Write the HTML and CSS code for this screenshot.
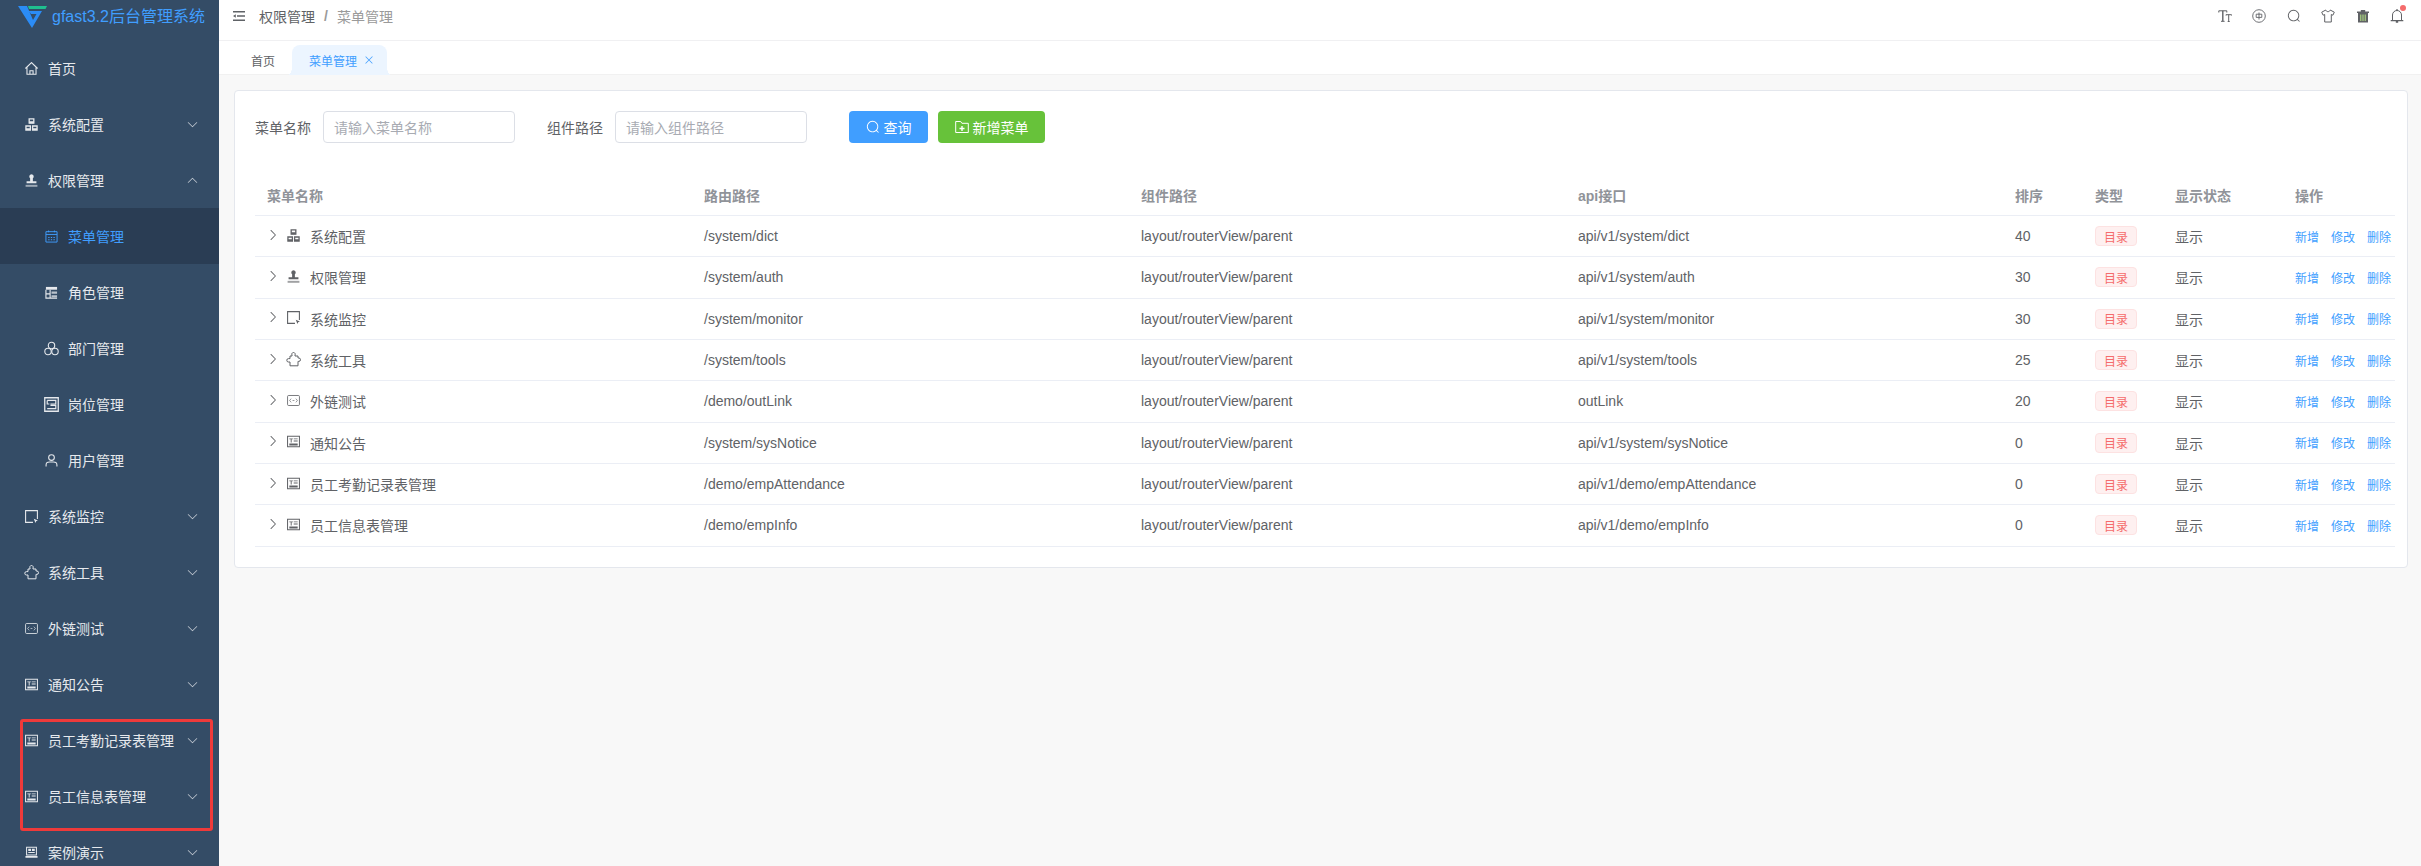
FILE: index.html
```html
<!DOCTYPE html>
<html lang="zh-CN">
<head>
<meta charset="utf-8">
<title>gfast3.2后台管理系统</title>
<link rel="stylesheet" href="styles.css">
</head>
<body>
<svg class="sprite" xmlns="http://www.w3.org/2000/svg">
  <symbol id="i-home" viewBox=".4 .4 13.2 13.2"><path d="M.8 7 7 1l6.200 6M2.400 5.800v7h9.200v-7M5.400 12.800V9.200h3.200v3.600" fill="none" stroke="currentColor" stroke-width="1.100"/></symbol>
  <symbol id="i-org" viewBox="0 0 14 14"><path d="M4.500 1h5v4.600h-5zM1 8.600h4.800V13H1zM8.200 8.600H13V13H8.200z" fill="none" stroke="currentColor" stroke-width="1.400"/><path d="M1 11h4.800v2H1zM8.200 11H13v2H8.200zM4.500 3.600h5v2h-5z" fill="currentColor"/></symbol>
  <symbol id="i-stamp" viewBox=".6 .4 12.800 13.200"><path d="M7 .6a2.300 2.300 0 0 1 1.400 4.100v3h3.600v2.200H2V7.700h3.600v-3A2.300 2.300 0 0 1 7 .6z" fill="currentColor"/><path d="M1 11.400h12v2H1z" fill="currentColor" opacity=".6"/></symbol>
  <symbol id="i-cal" viewBox="0 0 14 14"><path d="M1 1.800h12V13H1zM1 4.800h12" fill="none" stroke="currentColor" stroke-width="1"/><path d="M3.500 7.500h1.400v1H3.500zM6.300 7.500h1.400v1H6.300zM9.100 7.500h1.400v1H9.100zM3.500 10h1.400v1H3.500zM6.300 10h1.400v1H6.300zM9.100 10h1.400v1H9.100zM3.400.5h1v2h-1zM9.600.5h1v2h-1z" fill="currentColor"/></symbol>
  <symbol id="i-table" viewBox="0 0 14 14"><path d="M1 1h12v3H1z" fill="currentColor"/><path d="M1 4v9h12M1 8.500h4.500M5.500 4v9" fill="none" stroke="currentColor" stroke-width="1.200"/><path d="M7 6h6v2.400H7zM7 10h6v2H7z" fill="currentColor" opacity=".75"/></symbol>
  <symbol id="i-dept" viewBox="0 0 15 14"><g fill="none" stroke="currentColor" stroke-width="1.100"><circle cx="7.500" cy="4" r="3.200"/><circle cx="4" cy="10" r="3.200"/><circle cx="11" cy="10" r="3.200"/></g></symbol>
  <symbol id="i-post" viewBox="0 0 14 14"><path d="M.7.7h12.600v12.600H.7z" fill="none" stroke="currentColor" stroke-width="1.200"/><path d="M3 3.200h8v3.300H6M3 3.200v3.300h2M3 10.800h8V7.800H6" fill="none" stroke="currentColor" stroke-width="1.100"/></symbol>
  <symbol id="i-user" viewBox=".6 .4 12.800 13.200"><circle cx="7" cy="4" r="2.900" fill="none" stroke="currentColor" stroke-width="1.100"/><path d="M1.500 13v-1.500c0-2 1.800-3 3.500-3h4c1.700 0 3.500 1 3.500 3V13" fill="none" stroke="currentColor" stroke-width="1.100"/></symbol>
  <symbol id="i-monitor" viewBox=".4 .4 13.200 13.200"><path d="M8.500 13H1V1h12v8.500" fill="none" stroke="currentColor" stroke-width="1.100"/><path d="M9.300 9.300 13.500 11l-1.800.7-.7 1.800z" fill="currentColor"/></symbol>
  <symbol id="i-tool" viewBox="0 0 15 14"><path d="M4 3.500H6V2.500a1.700 1.700 0 1 1 3 0V3.500H12V5.500H12.800a1.700 1.700 0 1 1 0 3.400H12V13.300H4V9.500H2.500a1.700 1.700 0 1 1 0-3.400H4Z" fill="none" stroke="currentColor" stroke-width="1"/></symbol>
  <symbol id="i-code" viewBox="0 0 14 14"><rect x=".6" y="1.600" width="12.800" height="10.800" rx="1.200" fill="none" stroke="currentColor" stroke-width=".9"/><path d="M4.500 5 2.800 7l1.700 2M9.500 5l1.700 2-1.700 2M6 7h2" fill="none" stroke="currentColor" stroke-width=".7"/></symbol>
  <symbol id="i-notice" viewBox="0 0 14 14"><path d="M.6 1.300h12.800v11.400H.6z" fill="none" stroke="currentColor" stroke-width="1.100"/><path d="M2.500 3.700h3.800v1H5v3.500H4V4.700H2.500zM7.200 3.700h4.300v1H7.200zM7.200 6h4.300v1H7.200zM2.500 9.200h9v2h-9z" fill="currentColor"/></symbol>
  <symbol id="i-demo" viewBox="0 0 14 14"><path d="M1.700 1.300h10.600v8.500H1.700z" fill="none" stroke="currentColor" stroke-width="1.100"/><path d="M3.500 3h3v2.500h-3zM7.500 3h3v2.500h-3zM3.500 6.500h7v1h-7zM.5 10.700h13v2H.5z" fill="currentColor"/></symbol>
  <symbol id="i-down" viewBox="0 0 1024 1024"><path d="M831.872 340.864 512 652.672 192.128 340.864a30.592 30.592 0 0 0-42.752 0 29.12 29.12 0 0 0 0 41.600L489.664 714.240a32 32 0 0 0 44.672 0l340.288-331.712a29.120 29.120 0 0 0 0-41.728 30.592 30.592 0 0 0-42.752 0z" fill="currentColor"/></symbol>
  <symbol id="i-right" viewBox="0 0 1024 1024"><path d="M340.864 149.312a30.592 30.592 0 0 0 0 42.752L652.736 512 340.864 831.872a30.592 30.592 0 0 0 0 42.752 29.120 29.120 0 0 0 41.728 0L714.240 534.336a32 32 0 0 0 0-44.672L382.592 149.376a29.120 29.120 0 0 0-41.728 0z" fill="currentColor"/></symbol>
  <symbol id="i-close" viewBox="0 0 1024 1024"><path d="M764.288 214.592 512 466.880 259.712 214.592a31.936 31.936 0 0 0-45.120 45.120L466.752 512 214.528 764.224a31.936 31.936 0 1 0 45.120 45.184L512 557.184l252.288 252.288a31.936 31.936 0 0 0 45.120-45.120L557.120 512.064l252.288-252.352a31.936 31.936 0 1 0-45.120-45.184z" fill="currentColor"/></symbol>
  <symbol id="i-search" viewBox="0 0 1024 1024"><path d="m795.904 750.720 124.992 124.928a32 32 0 0 1-45.248 45.248L750.656 795.904a416 416 0 1 1 45.248-45.248zM480 832a352 352 0 1 0 0-704 352 352 0 0 0 0 704z" fill="currentColor"/></symbol>
  <symbol id="i-folder" viewBox="0 0 14 14"><path d="M.7 1.500h5l1.200 1.800h6.400v9.200H.7z" fill="none" stroke="currentColor" stroke-width="1"/><path d="M6.300 6h1.400v1.800h1.800v1.400H7.700V11H6.300V9.200H4.500V7.800h1.800z" fill="currentColor"/></symbol>
  <symbol id="i-fold" viewBox="0 0 12 12"><path d="M0 1h12v1.500H0zM0 9.500h12V11H0zM4 5.250h8v1.500H4zM0 6l2.800-1.800v3.600z" fill="currentColor"/></symbol>
</svg>

<div class="app">
  <aside class="sidebar">
    <div class="logo">
      <svg class="logo-mark" viewBox="0 0 29 22"><path d="M0 0h9l6 14 3.500-6H13l-2-3h13L14 22z" fill="#2b8cf6"/><path d="M10 0h19l-1.500 3H11z" fill="#1fbf8f"/></svg>
      <span class="logo-title">gfast3.2后台管理系统</span>
    </div>
    <nav class="menu">
      <a class="menu-item"><svg class="mi"><use href="#i-home"/></svg><span>首页</span></a>
      <a class="menu-item"><svg class="mi"><use href="#i-org"/></svg><span>系统配置</span><svg class="chev"><use href="#i-down"/></svg></a>
      <a class="menu-item"><svg class="mi"><use href="#i-stamp"/></svg><span>权限管理</span><svg class="chev up"><use href="#i-down"/></svg></a>
      <a class="menu-item sub active"><svg class="mi"><use href="#i-cal"/></svg><span>菜单管理</span></a>
      <a class="menu-item sub"><svg class="mi"><use href="#i-table"/></svg><span>角色管理</span></a>
      <a class="menu-item sub"><svg class="mi wide"><use href="#i-dept"/></svg><span>部门管理</span></a>
      <a class="menu-item sub"><svg class="mi wide"><use href="#i-post"/></svg><span>岗位管理</span></a>
      <a class="menu-item sub"><svg class="mi"><use href="#i-user"/></svg><span>用户管理</span></a>
      <a class="menu-item"><svg class="mi"><use href="#i-monitor"/></svg><span>系统监控</span><svg class="chev"><use href="#i-down"/></svg></a>
      <a class="menu-item"><svg class="mi wide"><use href="#i-tool"/></svg><span>系统工具</span><svg class="chev"><use href="#i-down"/></svg></a>
      <a class="menu-item"><svg class="mi"><use href="#i-code"/></svg><span>外链测试</span><svg class="chev"><use href="#i-down"/></svg></a>
      <a class="menu-item"><svg class="mi"><use href="#i-notice"/></svg><span>通知公告</span><svg class="chev"><use href="#i-down"/></svg></a>
      <a class="menu-item"><svg class="mi"><use href="#i-notice"/></svg><span>员工考勤记录表管理</span><svg class="chev"><use href="#i-down"/></svg></a>
      <a class="menu-item"><svg class="mi"><use href="#i-notice"/></svg><span>员工信息表管理</span><svg class="chev"><use href="#i-down"/></svg></a>
      <a class="menu-item"><svg class="mi"><use href="#i-demo"/></svg><span>案例演示</span><svg class="chev"><use href="#i-down"/></svg></a>
    </nav>
    <div class="highlight"></div>
  </aside>

  <div class="main">
    <header class="navbar">
      <svg class="fold"><use href="#i-fold"/></svg>
      <span class="crumb">权限管理</span>
      <span class="crumb-sep">/</span>
      <span class="crumb current">菜单管理</span>
      <div class="tools">
        <svg class="tool" viewBox="0 0 14 14"><path d="M.8 3.500V1.800h8v1.700M3 12.300h3.600M8 6.500V5.700h5.500v.8M9.700 12.500h2" fill="none" stroke="currentColor" stroke-width="1"/><path d="M4.800 1.800v10.500" stroke="currentColor" stroke-width="1.400"/><path d="M10.700 5.700v6.800" stroke="currentColor" stroke-width="1"/></svg>
        <svg class="tool" viewBox="0 0 14 14"><circle cx="7" cy="7" r="6.300" fill="none" stroke="currentColor" stroke-width=".9"/><path d="M4.200 5.200h5.600v3.200H4.200zM7 3.500v7" fill="none" stroke="currentColor" stroke-width=".9"/></svg>
        <svg class="tool"><use href="#i-search"/></svg>
        <svg class="tool" viewBox="0 0 14 14"><path d="M4.800 1 .7 3.200l1.400 3 1.600-.7V13h6.600V5.500l1.600.7 1.400-3L9.200 1C8.800 3.200 5.200 3.200 4.800 1z" fill="none" stroke="currentColor" stroke-width="1"/></svg>
        <svg class="tool" viewBox="0 0 14 14"><path d="M1 2.500h12v1.500H1zM4.800 1h4.400v1.500H4.800zM2 4h10v9.500H2z" fill="currentColor"/><path d="M4.300 5.500h1v6.500h-1zM6.500 5.500h1v6.500h-1zM8.700 5.500h1v6.500h-1z" fill="#b8e986"/></svg>
        <span class="bell">
          <svg class="tool" viewBox="0 0 14 14"><path d="M2.500 11.200V6a4.500 4.500 0 0 1 9 0v5.200" fill="none" stroke="currentColor" stroke-width="1"/><path d="M.7 11h12.600v1.300H.7zM5.800 12.300h2.400v1.400H5.800zM6.200.2h1.600v1.500H6.200z" fill="currentColor"/></svg>
          <i class="dot"></i>
        </span>
      </div>
    </header>

    <div class="tabs">
      <a class="tab">首页</a>
      <a class="tab active">菜单管理<svg class="tab-close"><use href="#i-close"/></svg></a>
    </div>

    <main class="content">
      <section class="card">
        <form class="search">
          <label class="field-label">菜单名称</label>
          <span class="input">请输入菜单名称</span>
          <label class="field-label second">组件路径</label>
          <span class="input">请输入组件路径</span>
          <button type="button" class="btn primary"><svg class="btn-icon"><use href="#i-search"/></svg>查询</button>
          <button type="button" class="btn success"><svg class="btn-icon"><use href="#i-folder"/></svg>新增菜单</button>
        </form>

        <table class="grid">
          <colgroup>
            <col class="c-path"><col class="c-path"><col class="c-path"><col class="c-path">
            <col class="c-num"><col class="c-num"><col class="c-show"><col class="c-ops">
          </colgroup>
          <thead>
            <tr><th>菜单名称</th><th>路由路径</th><th>组件路径</th><th>api接口</th><th>排序</th><th>类型</th><th>显示状态</th><th>操作</th></tr>
          </thead>
          <tbody>
            <tr><td><div class="name"><svg class="exp"><use href="#i-right"/></svg><svg class="ri"><use href="#i-org"/></svg>系统配置</div></td><td>/system/dict</td><td>layout/routerView/parent</td><td>api/v1/system/dict</td><td>40</td><td><span class="tag">目录</span></td><td class="show">显示</td><td class="ops"><a>新增</a><a>修改</a><a>删除</a></td></tr>
            <tr><td><div class="name"><svg class="exp"><use href="#i-right"/></svg><svg class="ri"><use href="#i-stamp"/></svg>权限管理</div></td><td>/system/auth</td><td>layout/routerView/parent</td><td>api/v1/system/auth</td><td>30</td><td><span class="tag">目录</span></td><td class="show">显示</td><td class="ops"><a>新增</a><a>修改</a><a>删除</a></td></tr>
            <tr><td><div class="name"><svg class="exp"><use href="#i-right"/></svg><svg class="ri"><use href="#i-monitor"/></svg>系统监控</div></td><td>/system/monitor</td><td>layout/routerView/parent</td><td>api/v1/system/monitor</td><td>30</td><td><span class="tag">目录</span></td><td class="show">显示</td><td class="ops"><a>新增</a><a>修改</a><a>删除</a></td></tr>
            <tr><td><div class="name"><svg class="exp"><use href="#i-right"/></svg><svg class="ri wide"><use href="#i-tool"/></svg>系统工具</div></td><td>/system/tools</td><td>layout/routerView/parent</td><td>api/v1/system/tools</td><td>25</td><td><span class="tag">目录</span></td><td class="show">显示</td><td class="ops"><a>新增</a><a>修改</a><a>删除</a></td></tr>
            <tr><td><div class="name"><svg class="exp"><use href="#i-right"/></svg><svg class="ri"><use href="#i-code"/></svg>外链测试</div></td><td>/demo/outLink</td><td>layout/routerView/parent</td><td>outLink</td><td>20</td><td><span class="tag">目录</span></td><td class="show">显示</td><td class="ops"><a>新增</a><a>修改</a><a>删除</a></td></tr>
            <tr><td><div class="name"><svg class="exp"><use href="#i-right"/></svg><svg class="ri"><use href="#i-notice"/></svg>通知公告</div></td><td>/system/sysNotice</td><td>layout/routerView/parent</td><td>api/v1/system/sysNotice</td><td>0</td><td><span class="tag">目录</span></td><td class="show">显示</td><td class="ops"><a>新增</a><a>修改</a><a>删除</a></td></tr>
            <tr><td><div class="name"><svg class="exp"><use href="#i-right"/></svg><svg class="ri"><use href="#i-notice"/></svg>员工考勤记录表管理</div></td><td>/demo/empAttendance</td><td>layout/routerView/parent</td><td>api/v1/demo/empAttendance</td><td>0</td><td><span class="tag">目录</span></td><td class="show">显示</td><td class="ops"><a>新增</a><a>修改</a><a>删除</a></td></tr>
            <tr><td><div class="name"><svg class="exp"><use href="#i-right"/></svg><svg class="ri"><use href="#i-notice"/></svg>员工信息表管理</div></td><td>/demo/empInfo</td><td>layout/routerView/parent</td><td>api/v1/demo/empInfo</td><td>0</td><td><span class="tag">目录</span></td><td class="show">显示</td><td class="ops"><a>新增</a><a>修改</a><a>删除</a></td></tr>
          </tbody>
        </table>
      </section>
    </main>
  </div>
</div>
</body>
</html>
```

FILE: styles.css
```css
* { box-sizing: border-box; }
html, body { margin: 0; height: 100%; overflow: hidden; }
body {
  font-family: "Liberation Sans", "Noto Sans CJK SC", sans-serif;
  font-size: 14px;
  color: #606266;
  background: #fff;
}
.sprite { width: 0; height: 0; position: absolute; }

.app { display: flex; height: 866px; }

/* sidebar */
.sidebar {
  position: relative;
  flex: 0 0 219px;
  background: #344c66;
  overflow: hidden;
}
.logo { display: flex; align-items: flex-start; height: 40px; padding-left: 18px; }
.logo-mark { width: 29px; height: 22px; margin-top: 6px; flex: none; }
.logo-title { margin: 5px 0 0 5px; font-size: 16px; line-height: 24px; color: #409eff; white-space: nowrap; }

.menu-item {
  display: flex;
  align-items: center;
  height: 56px;
  padding-left: 25px;
  color: #e6e9ed;
}
.menu-item.sub { padding-left: 45px; }
.menu-item.active { background: #2a3d54; color: #409eff; }
.mi { width: 13px; height: 13px; margin-right: 10px; flex: none; }
.mi.wide { width: 15px; height: 15px; margin-left: -1px; margin-right: 9px; }
.chev { width: 13px; height: 13px; margin-left: auto; margin-right: 20px; flex: none; color: #c7ced6; }
.chev.up { transform: rotate(180deg); }
.highlight {
  position: absolute;
  left: 20px;
  top: 719px;
  width: 193px;
  height: 112px;
  border: 3px solid #ef3a3a;
  border-radius: 3px;
  pointer-events: none;
}

/* main */
.main { flex: 1; min-width: 0; display: flex; flex-direction: column; background: #f8f8f8; }

.navbar {
  display: flex;
  align-items: center;
  height: 41px;
  padding: 0 0 8px 14px;
  background: #fff;
  border-bottom: 1px solid #f0f0f2;
}
.fold { width: 12px; height: 12px; color: #5f6266; margin-right: 14px; }
.crumb { color: #606266; }
.crumb-sep { margin: 0 9px; color: #9a9a9a; font-weight: 700; }
.crumb.current { color: #9a9a9a; }
.tools { display: flex; align-items: center; margin-left: auto; margin-right: 17px; gap: 20.4px; color: #606266; }
.tool { width: 14px; height: 14px; display: block; }
.bell { position: relative; }
.dot {
  position: absolute;
  top: -4px;
  right: -2px;
  width: 6px;
  height: 6px;
  border-radius: 50%;
  background: #f56c6c;
}

.tabs {
  display: flex;
  align-items: flex-end;
  height: 34px;
  padding-left: 15px;
  background: #fff;
  border-bottom: 1px solid #f1f1f1;
}
.tab {
  display: flex;
  align-items: center;
  height: 30px;
  margin-bottom: -1px;
  padding: 0 17px;
  font-size: 12px;
  color: #606266;
}
.tab.active {
  position: relative;
  padding: 0 12px 0 17px;
  border-radius: 8px 8px 0 0;
  background: #ecf5ff;
  color: #409eff;
}
.tab.active::before,
.tab.active::after {
  content: "";
  position: absolute;
  bottom: 0;
  width: 4px;
  height: 8px;
}
.tab.active::before { left: -4px; background: radial-gradient(4px 8px at 0 0, transparent 95%, #ecf5ff 100%); }
.tab.active::after { right: -4px; background: radial-gradient(4px 8px at 100% 0, transparent 95%, #ecf5ff 100%); }
.tab-close { width: 12px; height: 12px; margin-left: 6px; }

.content { flex: 1; padding: 15px 13px 0 15px; }
.card {
  height: 478px;
  padding: 20px 20px 0 20px;
  background: #fff;
  border: 1px solid #e4e7ed;
  border-radius: 4px;
}

.search { display: flex; align-items: center; height: 32px; }
.field-label { margin-right: 12px; }
.field-label.second { margin-left: 32px; }
.input {
  display: flex;
  align-items: center;
  width: 192px;
  height: 32px;
  padding: 0 10px;
  border: 1px solid #dcdfe6;
  border-radius: 4px;
  color: #a8abb2;
}
.btn {
  display: inline-flex;
  align-items: center;
  justify-content: center;
  height: 32px;
  padding: 0;
  border: 0;
  border-radius: 4px;
  color: #fff;
  font: inherit;
}
.btn.primary { width: 79px; margin-left: 42px; background: #409eff; }
.btn.success { width: 107px; margin-left: 10px; background: #67c23a; }
.btn-icon { width: 14px; height: 14px; margin-right: 4px; }

.grid {
  width: 2140px;
  margin-top: 32px;
  table-layout: fixed;
  border-collapse: separate;
  border-spacing: 0;
}
.c-path { width: 437px; }
.c-num { width: 80px; }
.c-show { width: 120px; }
.c-ops { width: 112px; }
.grid th, .grid td {
  height: 41.33px;
  padding: 0 12px;
  text-align: left;
  border-bottom: 1px solid #ebeef5;
  white-space: nowrap;
}
.grid th { height: 41px; color: #909399; font-weight: 700; }
.name { display: flex; align-items: center; }
.exp { width: 14px; height: 14px; margin: -3px 7px 0 -1px; flex: none; }
.ri { width: 13px; height: 13px; margin: -2px 10px 0 0; flex: none; }
.ri.wide { width: 15px; height: 15px; margin-left: -1px; margin-right: 9px; }
.tag {
  display: inline-flex;
  align-items: center;
  height: 20px;
  padding: 0 8px;
  font-size: 12px;
  color: #f56c6c;
  background: #fef0f0;
  border: 1px solid #fde2e2;
  border-radius: 4px;
}
.show { color: #606266; }
.ops { font-size: 12px; color: #409eff; }
.ops a { margin-right: 12px; }
```
